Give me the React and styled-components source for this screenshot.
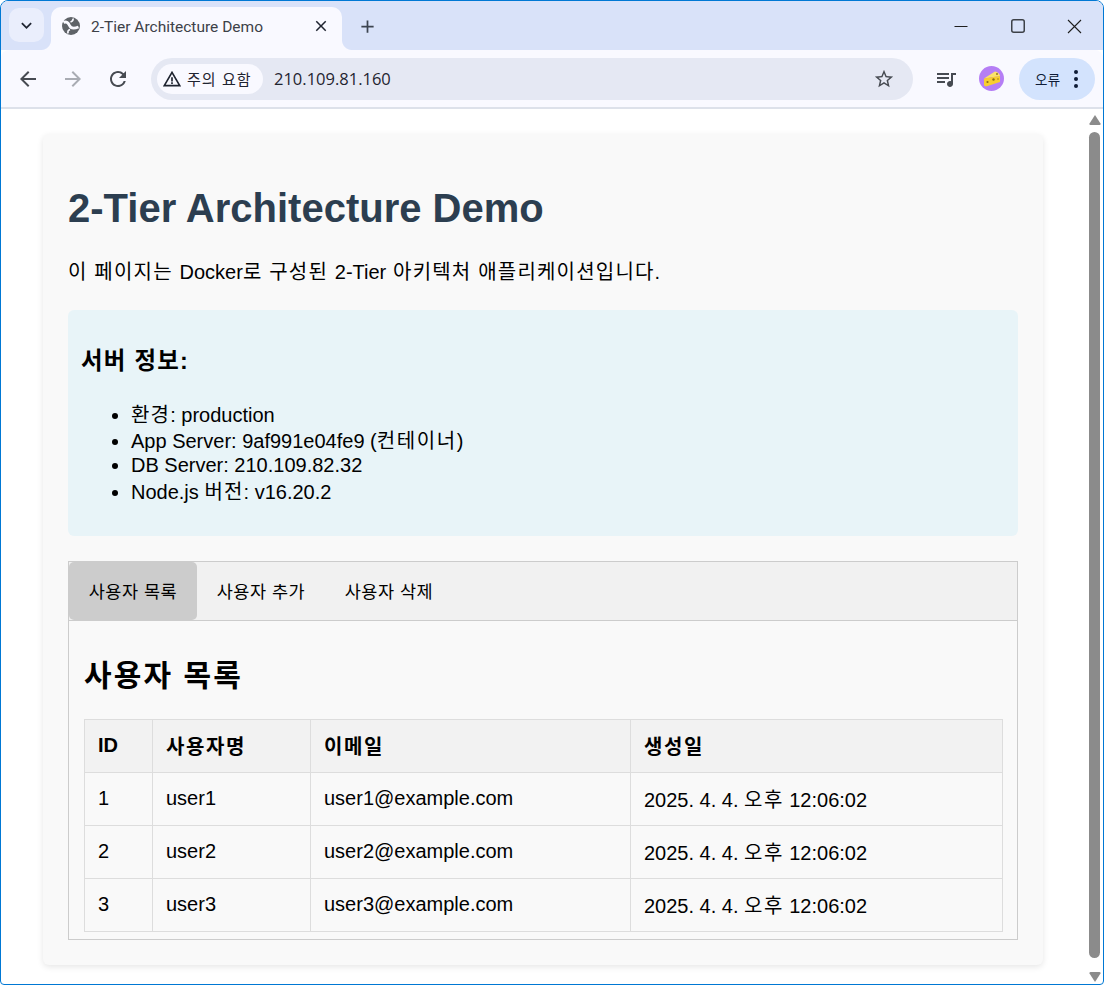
import React from 'react'
import styled, { createGlobalStyle } from 'styled-components'
import { MdArrowBack, MdArrowForward, MdRefresh, MdStarBorder, MdWarningAmber, MdQueueMusic, MdClose, MdExpandMore, MdAdd } from 'react-icons/md'

const FONT = '"Liberation Sans", "Noto Sans CJK KR", sans-serif'

const users = [
  { id: 1, name: 'user1', email: 'user1@example.com' },
  { id: 2, name: 'user2', email: 'user2@example.com' },
  { id: 3, name: 'user3', email: 'user3@example.com' }
]

const GlobalStyle = createGlobalStyle`
  html, body {
    margin: 0;
    padding: 0;
    background: #fff;
    overflow: hidden;
  }
  * { box-sizing: border-box; }
`

const Win = styled.div`
  width: 1104px;
  height: 985px;
  border: 1px solid #0078d4;
  border-radius: 8px 8px 4px 4px;
  overflow: hidden;
  display: flex;
  flex-direction: column;
  font-family: ${FONT};
  background: #fff;
`

const Ko = styled.span`
  letter-spacing: ${p => p.$ls || 0.06}em;
`

const TabStrip = styled.div`
  height: 49px;
  flex: none;
  background: #d9e2f9;
  display: flex;
  align-items: flex-start;
  padding: 6px 0 0 8px;
`

const TabSearch = styled.div`
  width: 35px;
  height: 34px;
  margin: 1px 7px 0 0;
  border-radius: 10px;
  background: #eaeefc;
  display: flex;
  align-items: center;
  justify-content: center;
  color: #1f2430;
`

const Tab = styled.div`
  position: relative;
  width: 291px;
  height: 43px;
  background: #f9f9ff;
  border-radius: 10px 10px 0 0;
  display: flex;
  align-items: center;
  padding: 0 12px 6px 11px;
  font-family: Roboto, "Liberation Sans", sans-serif;
  font-size: 15.5px;
  color: #3d4148;

  &::before, &::after {
    content: '';
    position: absolute;
    bottom: 0;
    width: 10px;
    height: 10px;
  }
  &::before {
    left: -10px;
    background: radial-gradient(circle at 0 0, #d9e2f9 9.5px, #f9f9ff 10.5px);
  }
  &::after {
    right: -10px;
    background: radial-gradient(circle at 100% 0, #d9e2f9 9.5px, #f9f9ff 10.5px);
  }
`

const TabTitle = styled.span`
  flex: 1;
  margin: 2px 0 0 11px;
  white-space: nowrap;
`

const NewTab = styled.div`
  width: 30px;
  height: 30px;
  margin: 4px 0 0 10px;
  display: flex;
  align-items: center;
  justify-content: center;
  color: #3d4450;
`

const WinButtons = styled.div`
  margin-left: auto;
  display: flex;
  color: #1f1f1f;
`

const WinButton = styled.div`
  width: 57px;
  height: 38px;
  display: flex;
  align-items: center;
  justify-content: center;
`

const Toolbar = styled.div`
  height: 59px;
  flex: none;
  background: #f9f9ff;
  border-bottom: 2px solid #dde1ea;
  border-radius: 8px 8px 0 0;
  display: flex;
  align-items: center;
  padding: 0 7px 0 12px;
`

const NavButton = styled.div`
  width: 30px;
  height: 30px;
  margin-right: 15px;
  display: flex;
  align-items: center;
  justify-content: center;
  color: ${p => (p.$off ? '#a9acb3' : '#474b52')};
`

const Omnibox = styled.div`
  width: 762px;
  height: 42px;
  margin-left: 3px;
  border-radius: 21px;
  background: #e5e8f3;
  display: flex;
  align-items: center;
  padding: 0 18px 0 6px;
`

const Chip = styled.div`
  height: 30px;
  width: 106px;
  flex: none;
  border-radius: 15px;
  background: #f9f9ff;
  display: flex;
  align-items: center;
  gap: 5px;
  padding-left: 5px;
  font-size: 15px;
  letter-spacing: 0.07em;
  color: #1f2430;
  white-space: nowrap;
`

const Url = styled.span`
  margin-left: 11px;
  flex: 1;
  font-family: "Open Sans", "Liberation Sans", sans-serif;
  font-size: 16.5px;
  color: #1f2430;
`

const ToolIcons = styled.div`
  display: flex;
  align-items: center;
  margin-left: 21px;
  gap: 21px;
  color: #474b52;
`

const ErrorPill = styled.div`
  margin-left: 15px;
  width: 76px;
  height: 42px;
  border-radius: 21px;
  background: #d3e3fd;
  display: flex;
  align-items: center;
  padding-left: 16px;
  font-size: 13.5px;
  letter-spacing: 0.03em;
  color: #0f1c36;
`

const Dots = styled.div`
  margin-left: 13px;
  display: flex;
  flex-direction: column;
  gap: 3px;
`

const Dot = styled.span`
  width: 4px;
  height: 4px;
  border-radius: 50%;
  background: #0f1c36;
`

const Viewport = styled.div`
  flex: 1;
  min-height: 0;
  display: flex;
`

const Page = styled.div`
  flex: 1;
  min-width: 0;
  padding: 25px 44px 0 42px;
  color: #000;
`

const Card = styled.div`
  height: 831px;
  padding: 25px;
  background: #f9f9f9;
  border-radius: 6px;
  box-shadow: 0 2px 6px rgba(0, 0, 0, 0.1);
`

const Title = styled.h1`
  margin: 26px 0 0;
  font-size: 40px;
  line-height: 46px;
  font-weight: 700;
  color: #2c3e50;
`

const Lead = styled.p`
  margin: 28px 0 0;
  font-size: 20px;
  line-height: 27px;
  white-space: nowrap;
`

const InfoBox = styled.div`
  margin-top: 24px;
  height: 226px;
  padding: 0 13px;
  background: #e8f4f8;
  border-radius: 6px;
  overflow: hidden;
`

const InfoTitle = styled.h3`
  margin: 37px 0 0;
  font-size: 23.4px;
  line-height: 28px;
  font-weight: 700;
  letter-spacing: 0.055em;
`

const InfoList = styled.ul`
  margin: 27px 0 0;
  padding-left: 50px;
`

const InfoItem = styled.li`
  font-size: 20px;
  line-height: ${p => p.$h || 27}px;
`

const TabsBox = styled.div`
  margin-top: 25px;
  height: 379px;
  border: 1px solid #ccc;
`

const TabBar = styled.div`
  height: 59px;
  display: flex;
  background: #f1f1f1;
  border-bottom: 1px solid #ccc;
`

const TabButton = styled.div`
  width: 128px;
  height: 58px;
  padding-bottom: 2px;
  display: flex;
  align-items: center;
  justify-content: center;
  font-size: 17.5px;
  letter-spacing: 0.03em;
  color: #000;
  border-radius: 5px;
  background: ${p => (p.$active ? '#ccc' : 'transparent')};
`

const TabBody = styled.div`
  padding: 0 15px;
`

const SectionTitle = styled.h2`
  margin: 37px 0 0;
  font-size: 30px;
  line-height: 36px;
  font-weight: 700;
  letter-spacing: 0.07em;
`

const UserTable = styled.table`
  margin-top: 25px;
  width: 918px;
  table-layout: fixed;
  border-collapse: collapse;
  font-size: 20px;
`

const HeadCell = styled.th`
  height: 53px;
  padding: 0 13px 2px;
  text-align: left;
  font-weight: 700;
  background: #f2f2f2;
  border: 1px solid #ddd;
`

const Cell = styled.td`
  height: 53px;
  padding: 0 13px 2px;
  border: 1px solid #ddd;
`

const Scrollbar = styled.div`
  width: 15px;
  margin-right: 1px;
  flex: none;
  display: flex;
  flex-direction: column;
  align-items: center;
  padding-top: 6px;
`

const Thumb = styled.div`
  width: 11px;
  height: 826px;
  margin: 7px 0 14px;
  border-radius: 6px;
  background: #8b8b8b;
`

function Globe() {
  return (
    <svg width="18" height="18" viewBox="0 0 18 18">
      <circle cx="9" cy="9" r="9" fill="#5f6368" />
      <path d="M1.500 5.500C4.500 4 6.500 6 7.500 8.500s4 3.500 9 1.500" fill="none" stroke="#f9f9ff" strokeWidth="2.800" />
      <path d="M11 1.500c.5 2-1 3-2.500 3.500M6 16.500c-.5-2 .5-3.500 2-4" fill="none" stroke="#f9f9ff" strokeWidth="1.600" />
    </svg>
  )
}

function Cheese() {
  return (
    <svg width="25" height="25" viewBox="0 0 25 25">
      <circle cx="12.500" cy="12.500" r="12.500" fill="#b57ef5" />
      <path d="M5 12.500 16 5.500c2.500.3 4.500 2 5 4.500z" fill="#fbe36a" />
      <path d="M5 12.500 21 10v6L7 20.500l-2-1z" fill="#f8cf2e" />
      <circle cx="8.500" cy="16" r="1.100" fill="#8a6d14" />
      <circle cx="14.500" cy="13.500" r="1.200" fill="#8a6d14" />
      <circle cx="18" cy="8" r="0.900" fill="#8a6d14" />
      <circle cx="19" cy="13" r="0.700" fill="#8a6d14" />
    </svg>
  )
}

function MinimizeGlyph() {
  return (
    <svg width="14" height="14" viewBox="0 0 14 14">
      <path d="M0.500 7.500h13" stroke="currentColor" strokeWidth="1.200" />
    </svg>
  )
}

function MaximizeGlyph() {
  return (
    <svg width="14" height="14" viewBox="0 0 14 14">
      <rect x="0.750" y="0.750" width="12.500" height="12.500" rx="2" fill="none" stroke="#3d4148" strokeWidth="1.500" />
    </svg>
  )
}

function CloseGlyph() {
  return (
    <svg width="15" height="15" viewBox="0 0 15 15">
      <path d="M1 1l13 13M14 1L1 14" stroke="currentColor" strokeWidth="1.100" />
    </svg>
  )
}

const ArrowSvg = styled.svg`
  flex: none;
`

function ScrollArrow({ down }) {
  return (
    <ArrowSvg width="12" height="10" viewBox="0 0 12 10">
      <path d={down ? 'M0.500 1.500Q0 0 1.500 0h9q1.500 0 1 1.500L6 10z' : 'M6 0l5.500 8.500q.5 1.500-1 1.500h-9q-1.500 0-1-1.500z'} fill="#8b8b8b" />
    </ArrowSvg>
  )
}

export default function App() {
  return (
    <Win>
      <GlobalStyle />
      <TabStrip>
        <TabSearch><MdExpandMore size={21} /></TabSearch>
        <Tab>
          <Globe />
          <TabTitle>2-Tier Architecture Demo</TabTitle>
          <MdClose size={18} color="#1f2430" />
        </Tab>
        <NewTab><MdAdd size={21} /></NewTab>
        <WinButtons>
          <WinButton><MinimizeGlyph /></WinButton>
          <WinButton><MaximizeGlyph /></WinButton>
          <WinButton><CloseGlyph /></WinButton>
        </WinButtons>
      </TabStrip>
      <Toolbar>
        <NavButton><MdArrowBack size={24} /></NavButton>
        <NavButton $off><MdArrowForward size={24} /></NavButton>
        <NavButton><MdRefresh size={24} /></NavButton>
        <Omnibox>
          <Chip><MdWarningAmber size={20} />주의 요함</Chip>
          <Url>210.109.81.160</Url>
          <MdStarBorder size={22} color="#474b52" />
        </Omnibox>
        <ToolIcons>
          <MdQueueMusic size={24} />
          <Cheese />
        </ToolIcons>
        <ErrorPill>
          오류
          <Dots><Dot /><Dot /><Dot /></Dots>
        </ErrorPill>
      </Toolbar>
      <Viewport>
        <Page>
          <Card>
            <Title>2-Tier Architecture Demo</Title>
            <Lead>
              <Ko>이 페이지는 </Ko>Docker<Ko>로 구성된 </Ko>2-Tier<Ko> 아키텍처 애플리케이션입니다.</Ko>
            </Lead>
            <InfoBox>
              <InfoTitle>서버 정보:</InfoTitle>
              <InfoList>
                <InfoItem><Ko>환경</Ko>: production</InfoItem>
                <InfoItem $h={24}>App Server: 9af991e04fe9 (<Ko $ls={0.08}>컨테이너</Ko>)</InfoItem>
                <InfoItem $h={24}>DB Server: 210.109.82.32</InfoItem>
                <InfoItem $h={30}>Node.js <Ko>버전</Ko>: v16.20.2</InfoItem>
              </InfoList>
            </InfoBox>
            <TabsBox>
              <TabBar>
                <TabButton $active>사용자 목록</TabButton>
                <TabButton>사용자 추가</TabButton>
                <TabButton>사용자 삭제</TabButton>
              </TabBar>
              <TabBody>
                <SectionTitle>사용자 목록</SectionTitle>
                <UserTable>
                  <colgroup>
                    <col width="68" />
                    <col width="158" />
                    <col width="320" />
                    <col width="372" />
                  </colgroup>
                  <thead>
                    <tr>
                      <HeadCell>ID</HeadCell>
                      <HeadCell><Ko $ls={0.08}>사용자명</Ko></HeadCell>
                      <HeadCell><Ko $ls={0.08}>이메일</Ko></HeadCell>
                      <HeadCell><Ko $ls={0.08}>생성일</Ko></HeadCell>
                    </tr>
                  </thead>
                  <tbody>
                    {users.map(u => (
                      <tr key={u.id}>
                        <Cell>{u.id}</Cell>
                        <Cell>{u.name}</Cell>
                        <Cell>{u.email}</Cell>
                        <Cell>2025. 4. 4. <Ko $ls={0.07}>오후</Ko> 12:06:02</Cell>
                      </tr>
                    ))}
                  </tbody>
                </UserTable>
              </TabBody>
            </TabsBox>
          </Card>
        </Page>
        <Scrollbar>
          <ScrollArrow />
          <Thumb />
          <ScrollArrow down />
        </Scrollbar>
      </Viewport>
    </Win>
  )
}
